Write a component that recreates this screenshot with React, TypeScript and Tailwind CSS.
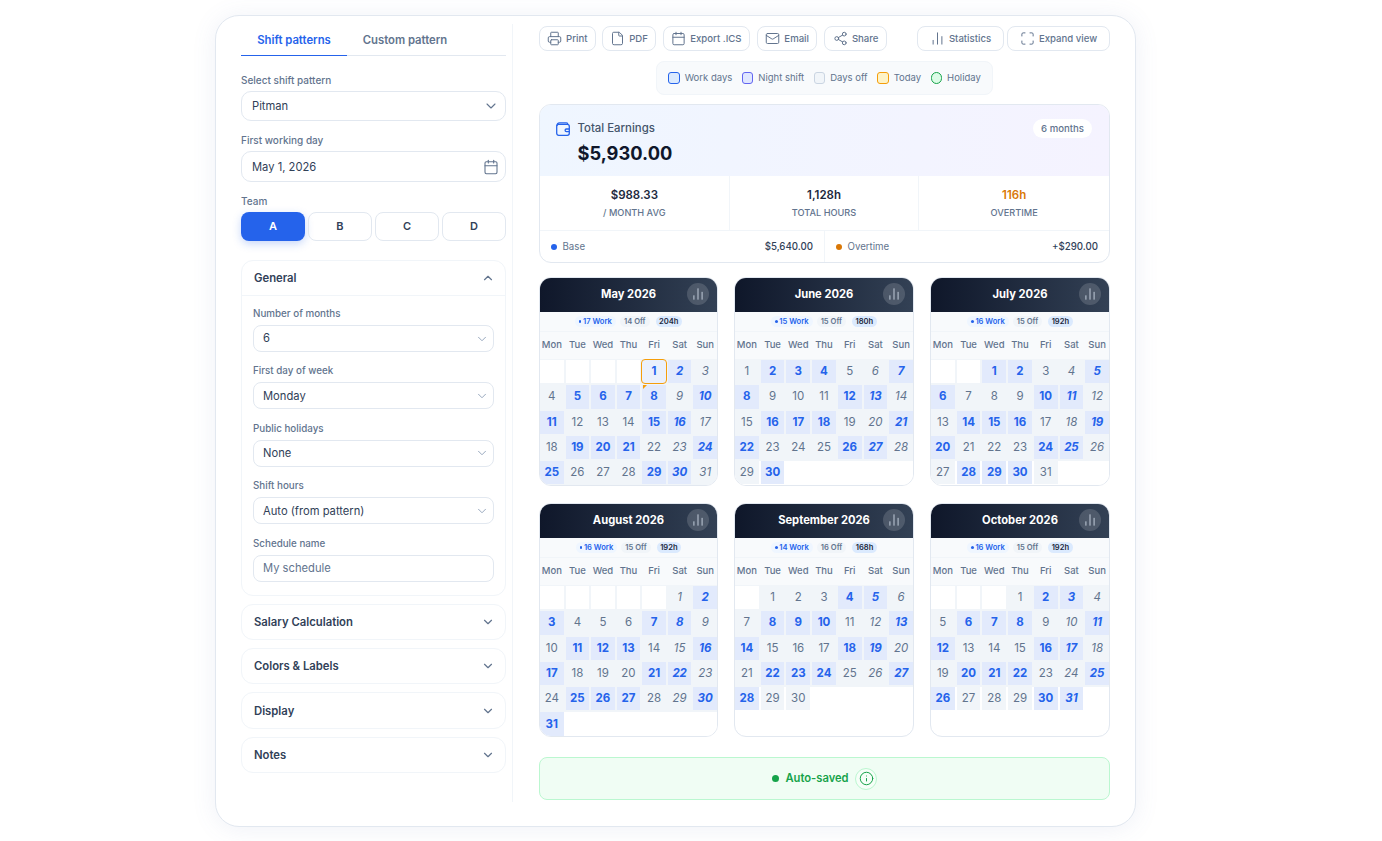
import React from 'react';
import {
  Printer, File, Calendar, Mail, Share2, ChartNoAxesColumn, Maximize, ChevronDown, ChevronUp, Info,
} from 'lucide-react';

const months = [
  { name: 'May 2026', offset: 4, days: 31, work: [1, 2, 5, 6, 7, 8, 10, 11, 15, 16, 19, 20, 21, 24, 25, 29, 30], w: 17, o: 14, h: '204h' },
  { name: 'June 2026', offset: 0, days: 30, work: [2, 3, 4, 7, 8, 12, 13, 16, 17, 18, 21, 22, 26, 27, 30], w: 15, o: 15, h: '180h' },
  { name: 'July 2026', offset: 2, days: 31, work: [1, 2, 5, 6, 10, 11, 14, 15, 16, 19, 20, 24, 25, 28, 29, 30], w: 16, o: 15, h: '192h' },
  { name: 'August 2026', offset: 5, days: 31, work: [2, 3, 7, 8, 11, 12, 13, 16, 17, 21, 22, 25, 26, 27, 30, 31], w: 16, o: 15, h: '192h' },
  { name: 'September 2026', offset: 1, days: 30, work: [4, 5, 8, 9, 10, 13, 14, 18, 19, 22, 23, 24, 27, 28], w: 14, o: 16, h: '168h' },
  { name: 'October 2026', offset: 3, days: 31, work: [2, 3, 6, 7, 8, 11, 12, 16, 17, 20, 21, 22, 25, 26, 30, 31], w: 16, o: 15, h: '192h' },
];

const weekdays = ['Mon', 'Tue', 'Wed', 'Thu', 'Fri', 'Sat', 'Sun'];

const Label = ({ children }: { children: React.ReactNode }) => (
  <div className="text-[9.8px] leading-[15px] font-medium text-slate-500">{children}</div>
);

const BigLabel = ({ children }: { children: React.ReactNode }) => (
  <div className="text-[10px] leading-[16px] font-medium text-slate-500">{children}</div>
);

const SmallSelect = ({ label, value }: { label: string; value: string }) => (
  <div>
    <Label>{label}</Label>
    <div className="mt-[4px] h-[27px] rounded-lg border border-slate-200 pl-[9px] pr-[4px] flex items-center justify-between text-[11.2px] text-slate-700">
      <span className="pt-[0.6px]">{value}</span>
      <ChevronDown size={14} strokeWidth={1.6} className="text-slate-400" />
    </div>
  </div>
);

const Collapsed = ({ title }: { title: string }) => (
  <div className="h-[36.4px] rounded-xl border border-slate-100 pl-[12px] pr-[10px] flex items-center justify-between">
    <span className="text-[11.3px] font-semibold text-slate-700 pt-[1px]">{title}</span>
    <ChevronDown size={14} className="text-slate-500" />
  </div>
);

const ToolButton = ({ icon, label, className = '' }: { icon: React.ReactNode; label: string; className?: string }) => (
  <button className={`h-[25px] rounded-lg border border-slate-200 bg-white flex items-center justify-center gap-[4px] text-[9.6px] font-medium text-slate-500 ${className}`}>
    {icon}
    <span className="pt-[1px]">{label}</span>
  </button>
);

const Swatch = ({ label, box }: { label: string; box: string }) => (
  <div className="flex items-center gap-[5px] text-[9.5px] text-slate-500">
    <span className={`w-[11.5px] h-[11.5px] border-[1.2px] ${box}`} />
    {label}
  </div>
);

const MonthCard = ({ m }: { m: (typeof months)[number] }) => {
  const cells = [];
  for (let i = 0; i < m.offset; i++) {
    cells.push(<div key={'e' + i} className="h-full bg-white" />);
  }
  for (let d = 1; d <= m.days; d++) {
    const col = (m.offset + d - 1) % 7;
    const weekend = col >= 5;
    const isWork = m.work.includes(d);
    const today = m.name === 'May 2026' && d === 1;
    const marker = m.name === 'May 2026' && d === 8;
    cells.push(
      <div
        key={d}
        className={`relative h-full flex items-center justify-center text-[11.5px]
          ${isWork ? 'bg-[#e2eafc] text-[#2563eb] font-bold' : 'bg-[#f1f5f9] text-slate-500'}
          ${weekend ? 'italic' : ''}
          ${today ? 'rounded-[3px] outline-[1.5px] outline-[#f59e0b] z-10 bg-[#eaf0fc]' : ''}`}
      >
        {d}
        {marker && <span className="absolute top-0 left-[1px] z-20 w-0 h-0 border-t-[4px] border-r-[4px] border-t-[#f59e0b] border-r-transparent" />}
      </div>
    );
  }
  const rows = [];
  for (let i = 0; i < cells.length; i += 7) {
    const part = cells.slice(i, i + 7);
    const full = part.length === 7;
    rows.push(
      <div
        key={i}
        className={`grid grid-cols-7 gap-x-[2px] h-[25.3px] py-[1px] ${full ? 'bg-[#f1f5f9]' : 'bg-white border-t border-[#f1f5f9] pt-0'}`}
      >
        {part}
      </div>
    );
  }
  return (
    <div className="rounded-xl border border-slate-200 overflow-hidden bg-white flex flex-col h-full">
      <div className="h-[34px] shrink-0 bg-gradient-to-r from-[#0f172a] to-[#334155] flex items-center justify-center relative">
        <span className="text-[11.2px] font-bold text-white -mt-[1px]">{m.name}</span>
        <span className="absolute right-[8px] top-[5px] w-[22px] h-[22px] rounded-full bg-white/15 flex items-center justify-center">
          <ChartNoAxesColumn size={14} strokeWidth={1.6} className="text-slate-300" />
        </span>
      </div>
      <div className="h-[20px] shrink-0 bg-slate-50 border-b border-slate-100 flex items-center justify-center gap-[3px] text-[7.6px] font-semibold">
        <span className="h-[11px] px-[4px] rounded-full bg-blue-50 text-[#2563eb] flex items-center gap-[1.5px]">
          <span className="w-[2.5px] h-[2.5px] rounded-full bg-[#2563eb]" />
          {m.w} Work
        </span>
        <span className="h-[11px] ml-[1px] px-[4px] rounded-full bg-slate-100 text-slate-500 flex items-center">{m.o} Off</span>
        <span className="h-[11px] ml-[3px] px-[3.5px] rounded-full bg-[#dbeafe] text-slate-800 flex items-center">{m.h}</span>
      </div>
      <div className="grid grid-cols-7 gap-x-[2px] h-[27px] shrink-0 bg-slate-50 items-center text-center text-[9.5px] font-[550] text-slate-500">
        {weekdays.map((w) => (
          <span key={w}>{w}</span>
        ))}
      </div>
      <div>{rows}</div>
    </div>
  );
};

export default function App() {
  return (
    <div className="h-[841px] bg-white pt-[15px] pl-[215px] font-['Inter',sans-serif] overflow-hidden">
      <div className="w-[921px] h-[812px] rounded-[24px] border border-[#e2e8f0] bg-white shadow-[0_2px_24px_rgba(100,116,180,0.10)] flex pt-[8px] pl-[25px] pr-[25px]">
        <aside className="w-[273px] pr-[6px] border-r border-slate-100 h-[778px]">
          <div className="flex h-[32px] border-b border-slate-200 text-[11.3px] font-semibold">
            <div className="w-[106px] pt-[1px] flex items-center justify-center text-[#2563eb] border-b border-[#2563eb] h-[32px]">Shift patterns</div>
            <div className="w-[116px] pt-[1px] flex items-center justify-center text-slate-500">Custom pattern</div>
          </div>

          <div className="mt-[16px]"><BigLabel>Select shift pattern</BigLabel></div>
          <div className="mt-[3px] h-[30px] rounded-[10px] border border-slate-200 pl-[10px] pr-[6px] flex items-center justify-between text-[11.2px] text-slate-700">
            Pitman
            <ChevronDown size={16} strokeWidth={1.6} className="text-slate-500" />
          </div>

          <div className="mt-[11px]"><BigLabel>First working day</BigLabel></div>
          <div className="mt-[3px] h-[31px] rounded-[10px] border border-slate-200 pl-[10px] pr-[6px] flex items-center justify-between text-[11.2px] text-slate-700">
            <span className="pt-[1px]">May 1, 2026</span>
            <Calendar size={16} strokeWidth={1.6} className="text-slate-500" />
          </div>

          <div className="mt-[11px]"><BigLabel>Team</BigLabel></div>
          <div className="mt-[3px] grid grid-cols-4 gap-[3px] text-[11px] font-semibold text-slate-700">
            <div className="h-[29px] rounded-lg bg-[#2563eb] text-white flex items-center justify-center shadow-[0_3px_8px_rgba(37,99,235,0.25)]">A</div>
            <div className="h-[29px] rounded-lg border border-slate-200 flex items-center justify-center">B</div>
            <div className="h-[29px] rounded-lg border border-slate-200 flex items-center justify-center">C</div>
            <div className="h-[29px] rounded-lg border border-slate-200 flex items-center justify-center">D</div>
          </div>

          <div className="mt-[19px] rounded-xl border border-slate-100">
            <div className="h-[35px] pl-[12px] pr-[10px] border-b border-slate-100 flex items-center justify-between">
              <span className="text-[11.3px] font-semibold text-slate-700">General</span>
              <ChevronUp size={14} className="text-slate-500" />
            </div>
            <div className="px-[11px] pt-[10px] pb-[13px] flex flex-col gap-[11.4px]">
              <SmallSelect label="Number of months" value="6" />
              <SmallSelect label="First day of week" value="Monday" />
              <SmallSelect label="Public holidays" value="None" />
              <SmallSelect label="Shift hours" value="Auto (from pattern)" />
              <div>
                <Label>Schedule name</Label>
                <div className="mt-[4px] h-[27px] rounded-lg border border-slate-200 px-[9px] flex items-center text-[11.2px] text-slate-500">My schedule</div>
              </div>
            </div>
          </div>

          <div className="mt-[8px] flex flex-col gap-[8px]">
            <Collapsed title="Salary Calculation" />
            <Collapsed title="Colors & Labels" />
            <Collapsed title="Display" />
            <Collapsed title="Notes" />
          </div>
        </aside>

        <main className="w-[571px] ml-[26px] mt-[2px]">
          <div className="flex justify-between">
            <div className="flex gap-[6.8px]">
              <ToolButton className="w-[56.5px]" label="Print" icon={<Printer size={15} strokeWidth={1.6} className="text-slate-500" />} />
              <ToolButton className="w-[53.5px]" label="PDF" icon={<File size={15} strokeWidth={1.6} className="text-slate-500" />} />
              <ToolButton className="w-[87.5px]" label="Export .ICS" icon={<Calendar size={15} strokeWidth={1.6} className="text-slate-500" />} />
              <ToolButton className="w-[60.5px]" label="Email" icon={<Mail size={15} strokeWidth={1.6} className="text-slate-500" />} />
              <ToolButton className="w-[63px]" label="Share" icon={<Share2 size={15} strokeWidth={1.6} className="text-slate-500" />} />
            </div>
            <div className="flex gap-[3px]">
              <ToolButton className="w-[87px]" label="Statistics" icon={<ChartNoAxesColumn size={15} strokeWidth={1.6} className="text-slate-500" />} />
              <ToolButton className="w-[103px]" label="Expand view" icon={<Maximize size={15} strokeWidth={1.6} className="text-slate-500" />} />
            </div>
          </div>

          <div className="flex justify-center mt-[10px]">
            <div className="h-[34px] w-[337px] rounded-lg bg-slate-50 border border-slate-100 flex items-center justify-center gap-[9.5px]">
              <Swatch label="Work days" box="rounded-[3px] bg-[#dbeafe] border-[#2563eb]" />
              <Swatch label="Night shift" box="rounded-[3px] bg-[#e0e7ff] border-[#6366f1]" />
              <Swatch label="Days off" box="rounded-[3px] bg-slate-100 border-slate-300" />
              <Swatch label="Today" box="rounded-[3px] bg-[#fef3c7] border-[#f59e0b]" />
              <Swatch label="Holiday" box="rounded-full bg-[#dcfce7] border-[#16a34a]" />
            </div>
          </div>

          <div className="mt-[9px] rounded-xl border border-slate-200 overflow-hidden">
            <div className="h-[71px] bg-gradient-to-r from-[#eff6ff] to-[#f5f3ff] flex justify-between pl-[16px] pr-[17px] pt-[14px]">
              <div className="flex gap-[7.5px]">
                <svg width="14" height="14" viewBox="0 0 14 14" fill="none" stroke="#2563eb" strokeWidth="1.3" className="mt-[3px] shrink-0">
                  <rect x="0.7" y="2.4" width="12.6" height="10.9" rx="2" />
                  <path d="M0.9 4C0.9 1.9 2 0.8 3.6 0.8H10.4C11.3 0.8 11.8 1.4 11.8 2.3" />
                  <path d="M13.3 7H10.4a1.2 1.2 0 0 0 0 2.6H13.3" />
                </svg>
                <div>
                  <div className="text-[11.4px] leading-[18px] font-medium text-slate-600">Total Earnings</div>
                  <div className="text-[18.3px] leading-[26px] font-bold text-slate-900 mt-[3px]">$5,930.00</div>
                </div>
              </div>
              <div className="h-[19px] px-[8px] rounded-full bg-white text-[9.6px] text-slate-500 font-medium flex items-center">
                <span className="pt-[1px]">6 months</span>
              </div>
            </div>
            <div className="grid grid-cols-3 h-[55px] border-b border-slate-100">
              <div className="flex flex-col items-center justify-center border-r border-slate-100">
                <div className="text-[11.5px] leading-[16px] font-semibold text-slate-800 -mt-[1px]">$988.33</div>
                <div className="mt-[4px] text-[9.2px] leading-[12px] text-slate-500 font-medium">/ MONTH AVG</div>
              </div>
              <div className="flex flex-col items-center justify-center border-r border-slate-100">
                <div className="text-[11.5px] leading-[16px] font-semibold text-slate-800 -mt-[1px]">1,128h</div>
                <div className="mt-[4px] text-[9.2px] leading-[12px] text-slate-500 font-medium">TOTAL HOURS</div>
              </div>
              <div className="flex flex-col items-center justify-center">
                <div className="text-[11.5px] leading-[16px] font-semibold text-[#d97706] -mt-[1px]">116h</div>
                <div className="mt-[4px] text-[9.2px] leading-[12px] text-slate-500 font-medium">OVERTIME</div>
              </div>
            </div>
            <div className="grid grid-cols-[285px_1fr] h-[31px] text-[9.7px]">
              <div className="flex items-center justify-between pl-[10.5px] pr-[11px] pt-[1px] border-r border-slate-100">
                <span className="flex items-center gap-[6px] text-slate-500">
                  <span className="w-[6px] h-[6px] rounded-full bg-[#2563eb]" />Base
                </span>
                <span className="text-slate-700 font-medium">$5,640.00</span>
              </div>
              <div className="flex items-center justify-between pl-[10.5px] pr-[11px] pt-[1px]">
                <span className="flex items-center gap-[6px] text-slate-500">
                  <span className="w-[6px] h-[6px] rounded-full bg-[#d97706]" />Overtime
                </span>
                <span className="text-slate-700 font-medium">+$290.00</span>
              </div>
            </div>
          </div>

          <div className="mt-[14px] grid grid-cols-[179px_180px_180px] gap-x-[16px] gap-y-[17px] grid-rows-[209px_234px]">
            {months.map((m) => (
              <MonthCard key={m.name} m={m} />
            ))}
          </div>

          <div className="mt-[20px] h-[43px] rounded-lg border border-[#bbf7d0] bg-[#f0fdf4] flex items-center justify-center gap-[6.5px] text-[11.2px] font-semibold text-[#16a34a]">
            <span className="w-[7px] h-[7px] rounded-full bg-[#16a34a]" />
            Auto-saved
            <span className="w-[22px] h-[22px] rounded-full border border-[#bbf7d0] bg-white/40 flex items-center justify-center">
              <Info size={15} strokeWidth={1.6} className="text-[#16a34a]" />
            </span>
          </div>
        </main>
      </div>
    </div>
  );
}
